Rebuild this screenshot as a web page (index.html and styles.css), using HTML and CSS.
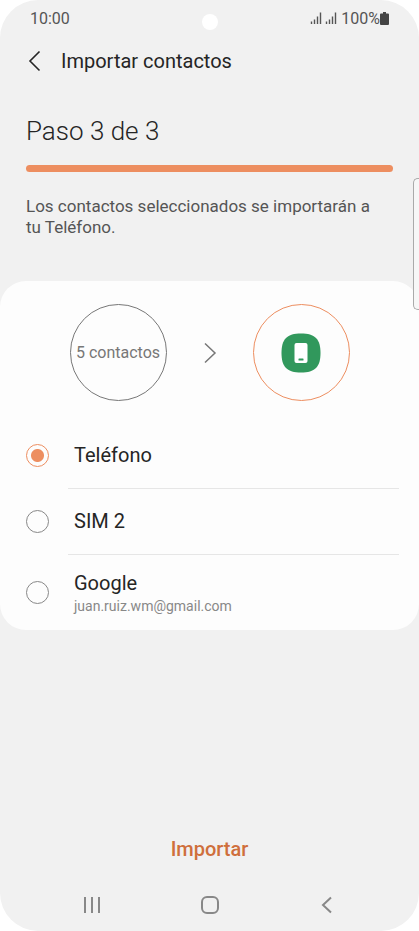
FILE: index.html
```
<!DOCTYPE html>
<html lang="es">
<head>
  <meta charset="utf-8">
  <meta name="viewport" content="width=device-width, initial-scale=1">
  <title>Importar contactos</title>
  <link rel="stylesheet" href="styles.css">
</head>
<body>
  <div class="phone">

    <!-- Status bar -->
    <div class="status-bar">
      <span class="time">10:00</span>
      <div class="status-icons">
        <svg width="27" height="12" viewBox="0 0 27 12" stroke="#555" stroke-width="1.4">
          <path d="M1.500 9.500V12M4.500 7.500V12M7.500 4.500V12M10.500 .5V12M16.500 9.500V12M19.500 7.500V12M22.500 4.500V12M25.500 .5V12"/>
        </svg>
        <span>100%</span>
        <svg width="9" height="13" viewBox="0 0 9 13" fill="#444">
          <path d="M3 0h3v1.500h2q1 0 1 1V12q0 1-1 1H1q-1 0-1-1V2.500q0-1 1-1h2z"/>
        </svg>
      </div>
    </div>
    <div class="camera"></div>
    <div class="edge-panel"></div>

    <!-- App bar -->
    <header class="app-bar">
      <button type="button" class="icon-btn" aria-label="Atrás">
        <svg width="13" height="22" viewBox="0 0 13 22" fill="none" stroke="#252525" stroke-width="1.6">
          <path d="M11.500 1.500L2 11l9.500 9.500"/>
        </svg>
      </button>
      <h1>Importar contactos</h1>
    </header>

    <!-- Step -->
    <section class="step">
      <h2>Paso 3 de 3</h2>
      <div class="progress"></div>
      <p>Los contactos seleccionados se importarán a tu Teléfono.</p>
    </section>

    <!-- Destination -->
    <main class="card">
      <div class="transfer">
        <div class="circle">5 contactos</div>
        <svg width="14" height="22" viewBox="0 0 14 22" fill="none" stroke="#777" stroke-width="1.5">
          <path d="M2 1.500L12 11 2 20.500"/>
        </svg>
        <div class="circle circle-active">
          <svg width="40" height="40" viewBox="0 0 40 40">
            <path fill="#31985c" d="M20 .5C34 .5 39.500 6 39.500 20S34 39.500 20 39.500 .5 34 .5 20 6 .5 20 .5z"/>
            <rect x="13.500" y="10" width="13" height="20" rx="2" fill="#fff"/>
            <rect x="17.500" y="25.500" width="5" height="2" rx="0.500" fill="#31985c"/>
          </svg>
        </div>
      </div>

      <form id="destination" class="options">
        <label class="option">
          <input type="radio" name="destination" value="phone" checked>
          <span class="option-text">Teléfono</span>
        </label>
        <label class="option">
          <input type="radio" name="destination" value="sim2">
          <span class="option-text">SIM 2</span>
        </label>
        <label class="option option-account">
          <input type="radio" name="destination" value="google">
          <span class="option-text">Google <small>juan.ruiz.wm@gmail.com</small></span>
        </label>
      </form>
    </main>

    <footer class="actions">
      <button type="submit" form="destination" class="import-btn">Importar</button>
    </footer>

    <!-- Navigation bar -->
    <nav class="nav-bar">
      <button type="button" class="icon-btn" aria-label="Recientes">
        <svg width="18" height="18" viewBox="0 0 18 18" stroke="#888" stroke-width="2">
          <path d="M2 1v16M9 1v16M16 1v16"/>
        </svg>
      </button>
      <button type="button" class="icon-btn" aria-label="Inicio">
        <svg width="18" height="18" viewBox="0 0 18 18" fill="none" stroke="#888" stroke-width="2">
          <rect x="1" y="1" width="16" height="16" rx="5"/>
        </svg>
      </button>
      <button type="button" class="icon-btn" aria-label="Volver">
        <svg width="18" height="18" viewBox="0 0 18 18" fill="none" stroke="#888" stroke-width="2">
          <path d="M13 1.500L5 9l8 7.500"/>
        </svg>
      </button>
    </nav>

  </div>
</body>
</html>
```
FILE: styles.css
```
* {
  box-sizing: border-box;
}
body {
  margin: 0;
  background: #fff;
  color: #252525;
  font-family: Roboto, "Liberation Sans", sans-serif;
}
h1, h2, p {
  margin: 0;
  font-weight: 400;
}
svg {
  display: block;
  flex: none;
}
button {
  border: none;
  background: none;
  font-family: inherit;
  cursor: pointer;
}
.phone {
  position: relative;
  display: flex;
  flex-direction: column;
  min-height: 100vh;
  overflow: hidden;
  background: #f1f1f1;
  border-radius: 38px;
}

/* Status bar */
.status-bar {
  display: flex;
  justify-content: space-between;
  align-items: center;
  height: 36px;
  padding: 0 30px;
  font-size: 16px;
  color: #555;
}
.status-icons {
  display: flex;
  align-items: center;
  gap: 4px;
}
.status-icons span {
  margin-right: -4px;
}
.camera {
  position: absolute;
  top: 14px;
  left: 50%;
  width: 16px;
  height: 16px;
  margin-left: -8px;
  border-radius: 50%;
  background: #fff;
}
.edge-panel {
  position: absolute;
  top: 178px;
  right: 0;
  width: 6px;
  height: 132px;
  border: 1px solid #aaa;
  border-right: none;
  border-radius: 5px 0 0 5px;
  background: #f7f7f7;
}

/* App bar */
.app-bar {
  display: flex;
  align-items: center;
  gap: 20px;
  height: 50px;
  padding: 0 28px;
}
.app-bar h1 {
  font-size: 20px;
}
.icon-btn {
  padding: 0;
}

/* Step */
.step {
  padding: 29px 26px 43px;
}
.step h2 {
  font-size: 26px;
  font-weight: 300;
  line-height: 32px;
}
.progress {
  height: 7px;
  margin: 18px 0 24px;
  border-radius: 4px;
  background: #ed8e60;
}
.step p {
  padding-right: 8px;
  font-size: 17px;
  line-height: 21px;
  color: #555;
}

/* Card */
.card {
  padding: 23px 20px 0 26px;
  border-radius: 26px;
  background: #fdfdfd;
}
.transfer {
  display: flex;
  justify-content: center;
  align-items: center;
  gap: 36px;
  padding-right: 6px;
}
.circle {
  display: flex;
  justify-content: center;
  align-items: center;
  width: 97px;
  height: 97px;
  border: 1px solid #777;
  border-radius: 50%;
  font-size: 16px;
  white-space: nowrap;
  color: #777;
}
.circle-active {
  border-color: #ed8e60;
}
.options {
  margin-top: 22px;
}
.option {
  display: grid;
  grid-template-columns: 42px 1fr;
  align-items: center;
}
.option input {
  appearance: none;
  width: 23px;
  height: 23px;
  margin: 0;
  border: 1px solid #888;
  border-radius: 50%;
}
.option input:checked {
  border-color: #ed8e60;
  background: radial-gradient(circle, #ed8e60 6px, transparent 7px);
}
.option-text {
  padding: 21px 6px;
  font-size: 20px;
  line-height: 23px;
}
.option + .option .option-text {
  border-top: 1px solid #e6e6e6;
}
.option-account .option-text {
  padding: 17px 6px 12px;
}
.option small {
  display: block;
  font-size: 14px;
  color: #888;
}

/* Bottom */
.actions {
  margin-top: auto;
  text-align: center;
}
.import-btn {
  padding: 8px 16px;
  font-size: 20px;
  font-weight: 500;
  line-height: 24px;
  color: #cf6f3c;
}
.nav-bar {
  display: flex;
  justify-content: space-between;
  padding: 27px 83px 17px;
}
```
